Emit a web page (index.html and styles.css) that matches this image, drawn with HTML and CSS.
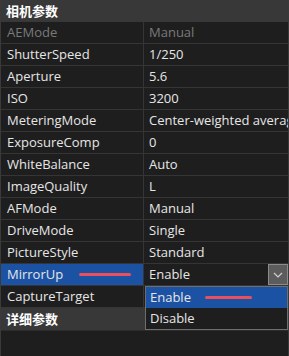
FILE: index.html
```html
<!DOCTYPE html>
<html lang="zh-CN">
<head>
  <meta charset="UTF-8" />
  <title>相机参数</title>
  <link rel="stylesheet" href="styles.css">
</head>
<body>
  <div class="panel">
    <div class="group">相机参数</div>
    <div class="props">
      <div class="row disabled"><div class="key">AEMode</div><div class="val">Manual</div></div>
      <div class="row"><div class="key">ShutterSpeed</div><div class="val">1/250</div></div>
      <div class="row"><div class="key">Aperture</div><div class="val">5.6</div></div>
      <div class="row"><div class="key">ISO</div><div class="val">3200</div></div>
      <div class="row"><div class="key">MeteringMode</div><div class="val">Center-weighted average</div></div>
      <div class="row"><div class="key">ExposureComp</div><div class="val">0</div></div>
      <div class="row"><div class="key">WhiteBalance</div><div class="val">Auto</div></div>
      <div class="row"><div class="key">ImageQuality</div><div class="val">L</div></div>
      <div class="row"><div class="key">AFMode</div><div class="val">Manual</div></div>
      <div class="row"><div class="key">DriveMode</div><div class="val">Single</div></div>
      <div class="row"><div class="key">PictureStyle</div><div class="val">Standard</div></div>
      <div class="row selected">
        <div class="key">MirrorUp <span class="mark"></span></div>
        <div class="val combo">
          <span class="combo-text">Enable</span>
          <span class="combo-btn">
            <svg width="10" height="6" viewBox="0 0 10 6"><path d="M1 1l4 4 4-4" fill="none" stroke="#d0d0d0" stroke-width="1.2"/></svg>
          </span>
          <ul class="popup">
            <li class="active">Enable <span class="mark"></span></li>
            <li>Disable</li>
          </ul>
        </div>
      </div>
      <div class="row"><div class="key">CaptureTarget</div><div class="val"></div></div>
    </div>
    <div class="group">详细参数</div>
    <div class="empty"></div>
  </div>
</body>
</html>
```

FILE: styles.css
```css
body {
  margin: 0;
  background: #1e1e1e;
  font-family: "Open Sans", "Noto Sans CJK SC", sans-serif;
  font-size: 13px;
  color: #e6e6e6;
}
.panel {
  width: 289px;
  height: 356px;
  box-sizing: border-box;
  border-left: 1px solid #3a3a3a;
  border-right: 1px solid #3a3a3a;
  display: flex;
  flex-direction: column;
}
.group {
  height: 22px;
  line-height: 22px;
  padding-left: 5px;
  background: #383838;
  color: #ffffff;
  font-family: "Noto Sans CJK SC", sans-serif;
  font-weight: bold;
}
.group + .empty {
  flex: 1;
  border-top: 1px solid #2c2c2c;
}
.row {
  display: grid;
  grid-template-columns: 143px 1fr;
  height: 21px;
  border-bottom: 1px solid #353535;
}
.key, .val {
  line-height: 21px;
  white-space: nowrap;
  overflow: hidden;
}
.key {
  padding-left: 6px;
  border-right: 1px solid #353535;
}
.val {
  padding-left: 5px;
}
.disabled {
  color: #7a7a7a;
}
.selected .key {
  background: #1c52a4;
  display: flex;
  align-items: center;
  gap: 16px;
}
.mark {
  display: inline-block;
  width: 52px;
  height: 3px;
  border-radius: 2px;
  background: #e8505c;
}
.combo {
  position: relative;
  overflow: visible;
  display: flex;
  justify-content: space-between;
  padding-right: 0;
}
.combo-btn {
  width: 20px;
  height: 21px;
  box-sizing: border-box;
  background: #5c5c5c;
  border: 1px solid #8c8c8c;
  display: flex;
  align-items: center;
  justify-content: center;
}
.popup {
  position: absolute;
  left: 1px;
  right: 0;
  top: 22px;
  margin: 0;
  padding: 0;
  list-style: none;
  background: #1e1e1e;
  border: 1px solid #6e6e6e;
  z-index: 2;
}
.popup li {
  height: 21px;
  line-height: 21px;
  padding-left: 4px;
  display: flex;
  align-items: center;
  gap: 14px;
}
.popup li.active {
  background: #1c52a4;
}
.popup .mark {
  width: 47px;
}
```
